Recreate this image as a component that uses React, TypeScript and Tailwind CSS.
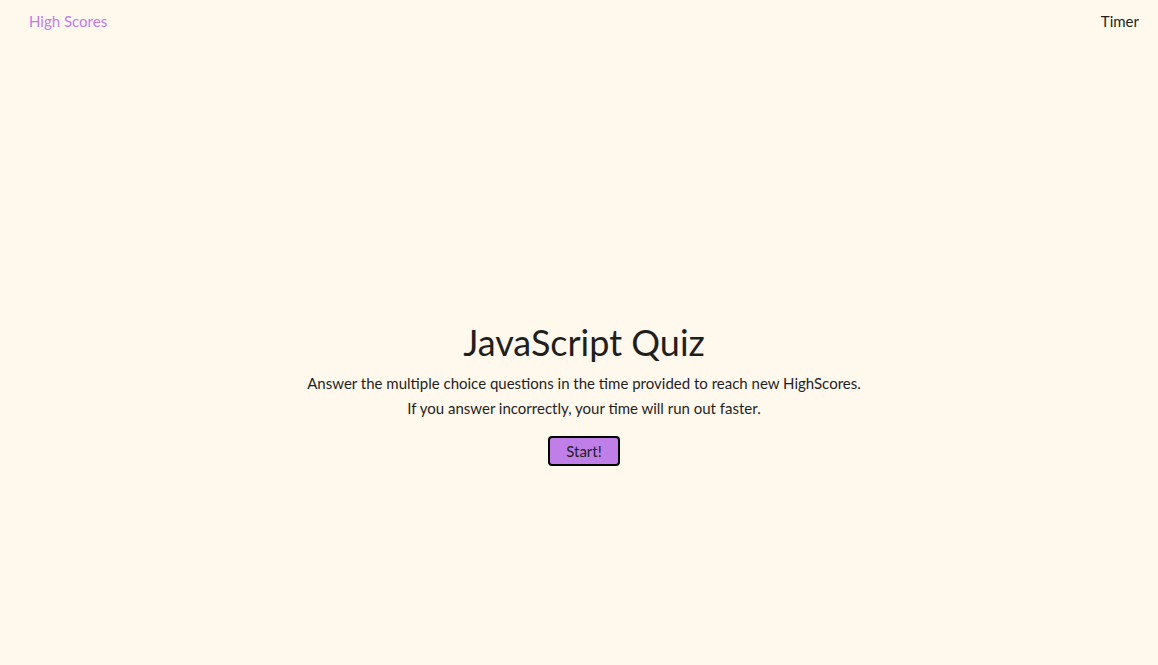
import React from "react";

export default function App() {
  return (
    <div className="min-h-screen w-full bg-[#fff8ed] text-[#1f1f1f]" style={{ fontFamily: "Lato, 'Open Sans', sans-serif" }}>
      <header className="flex justify-between items-center px-[29px] pr-[19px] h-[42px]">
        <a className="text-[15px] text-[#bf7ded] cursor-pointer">High Scores</a>
        <span className="text-[15px]">Timer</span>
      </header>
      <main className="flex flex-col items-center pt-[275px] pl-[10px]">
        <h1 className="text-[36px] leading-[50px] font-normal">JavaScript Quiz</h1>
        <p className="text-[15px] leading-[25px] mt-[4px] text-center">
          Answer the multiple choice questions in the time provided to reach new HighScores.
          <br />
          If you answer incorrectly, your time will run out faster.
        </p>
        <button className="mt-[15px] w-[72px] h-[30px] bg-[#c07ee8] border-2 border-black rounded-[4px] text-[15px]">
          Start!
        </button>
      </main>
    </div>
  );
}
